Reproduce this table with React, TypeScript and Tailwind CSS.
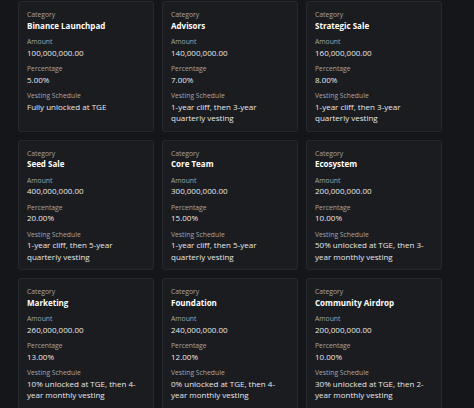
const allocations = [
  { category: "Binance Launchpad", amount: "100,000,000.00", percentage: "5.00%", vesting: "Fully unlocked at TGE" },
  { category: "Advisors", amount: "140,000,000.00", percentage: "7.00%", vesting: "1-year cliff, then 3-year quarterly vesting" },
  { category: "Strategic Sale", amount: "160,000,000.00", percentage: "8.00%", vesting: "1-year cliff, then 3-year quarterly vesting" },
  { category: "Seed Sale", amount: "400,000,000.00", percentage: "20.00%", vesting: "1-year cliff, then 5-year quarterly vesting" },
  { category: "Core Team", amount: "300,000,000.00", percentage: "15.00%", vesting: "1-year cliff, then 5-year quarterly vesting" },
  { category: "Ecosystem", amount: "200,000,000.00", percentage: "10.00%", vesting: "50% unlocked at TGE, then 3-year monthly vesting" },
  { category: "Marketing", amount: "260,000,000.00", percentage: "13.00%", vesting: "10% unlocked at TGE, then 4-year monthly vesting" },
  { category: "Foundation", amount: "240,000,000.00", percentage: "12.00%", vesting: "0% unlocked at TGE, then 4-year monthly vesting" },
  { category: "Community Airdrop", amount: "200,000,000.00", percentage: "10.00%", vesting: "30% unlocked at TGE, then 2-year monthly vesting" },
]

function Field({ label, children, bold }: { label: string; children: React.ReactNode; bold?: boolean }) {
  return (
    <div>
      <div className="text-[6.8px] leading-[9.5px] text-[#a2a6ad]">{label}</div>
      <div className={`text-[8px] leading-[11.5px] ${bold ? "font-bold text-white" : "text-[#e8e9eb]"}`}>
        {children}
      </div>
    </div>
  )
}

export default function App() {
  return (
    <div
      className="min-h-[408px] w-[474px] overflow-hidden bg-[#14161a] pt-px pl-[18px]"
      style={{ fontFamily: '"Open Sans", "Noto Sans", sans-serif' }}
    >
      <div className="grid w-[424px] grid-cols-3 gap-2">
        {allocations.map((a) => (
          <div key={a.category} className="flex flex-col gap-[6px] rounded-[3px] border border-[#25282d] bg-[#1a1c20] px-2 pt-2 pb-[7px]">
            <Field label="Category" bold>{a.category}</Field>
            <Field label="Amount">{a.amount}</Field>
            <Field label="Percentage">{a.percentage}</Field>
            <Field label="Vesting Schedule">{a.vesting}</Field>
          </div>
        ))}
      </div>
    </div>
  )
}
